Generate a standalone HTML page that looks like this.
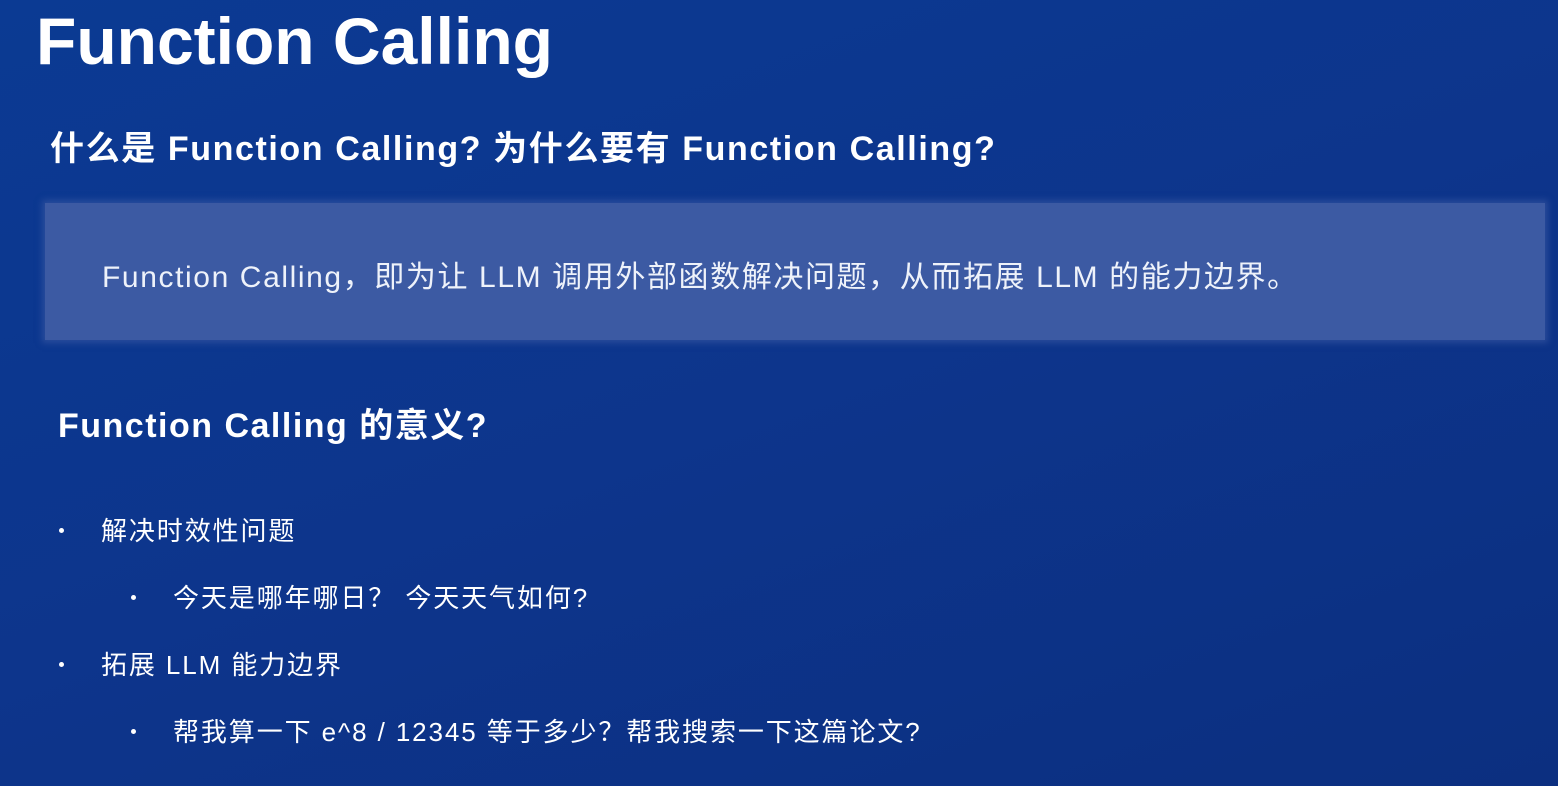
<!DOCTYPE html>
<html><head><meta charset="utf-8"><style>
html,body{margin:0;padding:0}
body{width:1558px;height:786px;overflow:hidden;position:relative;
background:linear-gradient(160deg,#0b3a93 0%,#0d358c 50%,#0c2f80 100%);
font-family:"Liberation Sans","Noto Sans CJK SC",sans-serif;color:#fff}
.a{position:absolute;white-space:nowrap;line-height:1}
.box{position:absolute;left:45px;top:203px;width:1500px;height:137px;background:#3c5aa3;box-shadow:0 0 6px 3px rgba(60,90,163,.6)}
.dot{position:absolute;width:5px;height:5px;border-radius:50%;background:#fff}
.b{font-size:26px;letter-spacing:1.9px}
</style></head><body>
<div class="a" style="left:36px;top:8px;font-size:66px;font-weight:bold;">Function Calling</div>
<div class="a" style="left:50px;top:132px;font-size:34px;font-weight:bold;letter-spacing:1.6px">什么是 Function Calling? 为什么要有 Function Calling?</div>
<div class="box"></div>
<div class="a" style="left:102px;top:263px;font-size:30px;color:#eef2fa;letter-spacing:1.6px">Function Calling，即为让 LLM 调用外部函数解决问题，从而拓展 LLM 的能力边界。</div>
<div class="a" style="left:58px;top:409px;font-size:34px;font-weight:bold;letter-spacing:1.5px">Function Calling 的意义?</div>
<div class="dot" style="left:59px;top:528px"></div>
<div class="a b" style="left:101px;top:518px">解决时效性问题</div>
<div class="dot" style="left:131px;top:595px"></div>
<div class="a b" style="left:173px;top:585px">今天是哪年哪日？ 今天天气如何?</div>
<div class="dot" style="left:59px;top:662px"></div>
<div class="a b" style="left:101px;top:652px">拓展 LLM 能力边界</div>
<div class="dot" style="left:131px;top:729px"></div>
<div class="a b" style="left:173px;top:719px">帮我算一下 e^8 / 12345 等于多少？帮我搜索一下这篇论文?</div>
</body></html>
